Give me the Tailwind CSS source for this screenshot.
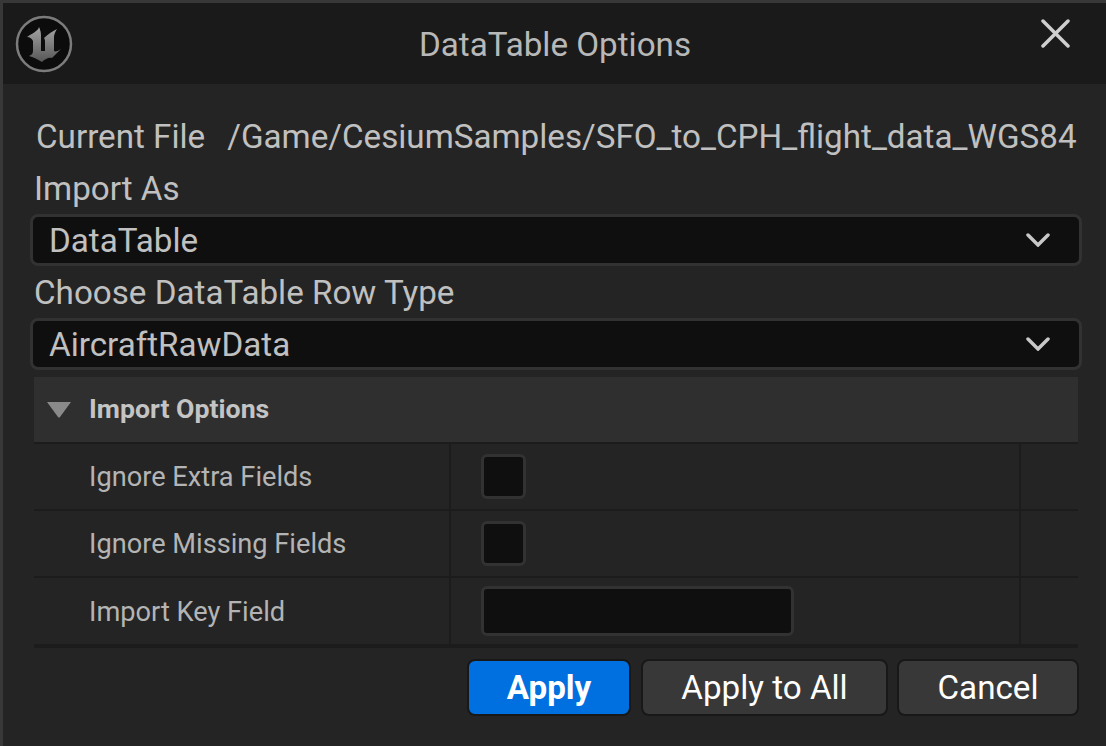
<!DOCTYPE html>
<html>
<head>
<meta charset="utf-8">
<script src="https://cdn.jsdelivr.net/npm/@tailwindcss/browser@4"></script>
</head>
<body class="bg-[#242424]">
<div class="w-[1106px] h-[746px] overflow-hidden flex flex-col bg-[#242424] border-l-[3px] border-t-[3px] border-[#383838] font-['Roboto',sans-serif] text-[#c0c0c0]">
  <div class="h-[81px] shrink-0 bg-[#1a1a1a] flex items-start relative">
    <svg class="absolute left-[12px] top-[12px]" width="58" height="58" viewBox="0 0 58 58">
      <defs><linearGradient id="g" x1="0" y1="0" x2="0" y2="1"><stop offset="0" stop-color="#a4a4a4"/><stop offset="1" stop-color="#565656"/></linearGradient></defs>
      <circle cx="29" cy="29" r="27" fill="#0c0c0c" stroke="#7c7c7c" stroke-width="2.5"/>
      <path d="M24 12 C23 16 18 18 12 22 C15 22 17 24 18 26 L18 36 C18 38 17 40 14 41 C18 42 22 44 27 47 C30 44 34 42 37 43 C40 40 43 37 46 34 C43 36 41 37 39 36 L39 22 C39 20 40 17 42 14 C38 16 33 19 29 23 C30 24 30 26 30 28 L30 36 L26 36 L26 20 C26 17 25 14 24 12 Z" fill="url(#g)"/>
    </svg>
    <div class="w-full text-center text-[33.2px] leading-[38px] mt-[23px] pl-[1px] text-[#b8b8b8]">DataTable Options</div>
    <svg class="absolute left-[1038px] top-[16px]" width="29" height="29" viewBox="0 0 29 29">
      <path d="M2 2 L27 27 M27 2 L2 27" stroke="#cfcfcf" stroke-width="3.5" stroke-linecap="round"/>
    </svg>
  </div>
  <div class="flex-1 flex flex-col pl-[27px] pr-[22px]">
    <div class="flex gap-[22px] pl-[6px] mt-[33px] h-[40px] items-center text-[33.2px] whitespace-nowrap">
      <span>Current File</span><span>/Game/CesiumSamples/SFO_to_CPH_flight_data_WGS84</span>
    </div>
    <div class="pl-[4px] h-[38px] mt-[13px] flex items-center text-[33.2px] leading-[38px]">Import As</div>
    <div class="mt-[6px] h-[52px] w-[1052px] shrink-0 rounded-[8px] bg-[#0f0f0f] border-[3px] border-[#323232] flex items-center justify-between pl-[16px] pr-[29px] text-[33.2px]">
      <span class="pt-[2px]">DataTable</span>
      <svg width="24" height="14" viewBox="0 0 24 14"><path d="M2 2 L12 12 L22 2" fill="none" stroke="#c8c8c8" stroke-width="3.5" stroke-linecap="round"/></svg>
    </div>
    <div class="pl-[4px] h-[38px] mt-[8px] flex items-center text-[33.2px] leading-[38px]">Choose DataTable Row Type</div>
    <div class="mt-[6px] h-[52px] w-[1052px] shrink-0 rounded-[8px] bg-[#0f0f0f] border-[3px] border-[#323232] flex items-center justify-between pl-[16px] pr-[29px] text-[33.2px]">
      <span class="pt-[2px]">AircraftRawData</span>
      <svg width="24" height="14" viewBox="0 0 24 14"><path d="M2 2 L12 12 L22 2" fill="none" stroke="#c8c8c8" stroke-width="3.5" stroke-linecap="round"/></svg>
    </div>
    <div class="ml-[4px] w-[1044px] mt-[7px] flex flex-col">
      <div class="h-[67px] bg-[#2f2f2f] border-b-[2px] border-[#1c1c1c] flex items-center pl-[12px] gap-[17px]">
        <svg width="26" height="16" viewBox="0 0 26 16"><path d="M1 0 H25 L14 15 Q13 16 12 15 Z" fill="#8a8a8a"/></svg>
        <span class="text-[26.7px] font-bold text-[#c4c4c4]">Import Options</span>
      </div>
      <div class="h-[67px] border-b-[2px] border-[#1c1c1c] flex">
        <div class="w-[417px] border-r-[2px] border-[#1c1c1c] pl-[55px] pt-[2px] flex items-center text-[27.2px] text-[#b4b4b4]">Ignore Extra Fields</div>
        <div class="w-[570px] border-r-[2px] border-[#1c1c1c] pl-[30px] flex items-center"><div class="w-[45px] h-[45px] rounded-[6px] bg-[#0f0f0f] border-[3px] border-[#323232]"></div></div>
      </div>
      <div class="h-[67px] border-b-[2px] border-[#1c1c1c] flex">
        <div class="w-[417px] border-r-[2px] border-[#1c1c1c] pl-[55px] pt-[2px] flex items-center text-[27.2px] text-[#b4b4b4]">Ignore Missing Fields</div>
        <div class="w-[570px] border-r-[2px] border-[#1c1c1c] pl-[30px] flex items-center"><div class="w-[45px] h-[45px] rounded-[6px] bg-[#0f0f0f] border-[3px] border-[#323232]"></div></div>
      </div>
      <div class="h-[70px] border-b-[4px] border-[#1c1c1c] flex">
        <div class="w-[417px] border-r-[2px] border-[#1c1c1c] pl-[55px] pt-[2px] flex items-center text-[27.2px] text-[#b4b4b4]">Import Key Field</div>
        <div class="w-[570px] border-r-[2px] border-[#1c1c1c] pl-[30px] flex items-center"><div class="w-[313px] h-[50px] rounded-[6px] bg-[#0f0f0f] border-[3px] border-[#323232]"></div></div>
      </div>
    </div>
    <div class="mt-[11px] w-[1052px] flex justify-end gap-[9px] text-[33.2px] text-white">
      <div class="w-[164px] h-[57px] mr-[1px] rounded-[8px] bg-[#0070e0] border-[2px] border-[#181818] flex items-center justify-center font-bold">Apply</div>
      <div class="w-[247px] h-[57px] rounded-[8px] bg-[#383838] border-[2px] border-[#181818] flex items-center justify-center">Apply to All</div>
      <div class="w-[182px] h-[57px] mr-[3px] rounded-[8px] bg-[#383838] border-[2px] border-[#181818] flex items-center justify-center">Cancel</div>
    </div>
  </div>
</div>
</body>
</html>
